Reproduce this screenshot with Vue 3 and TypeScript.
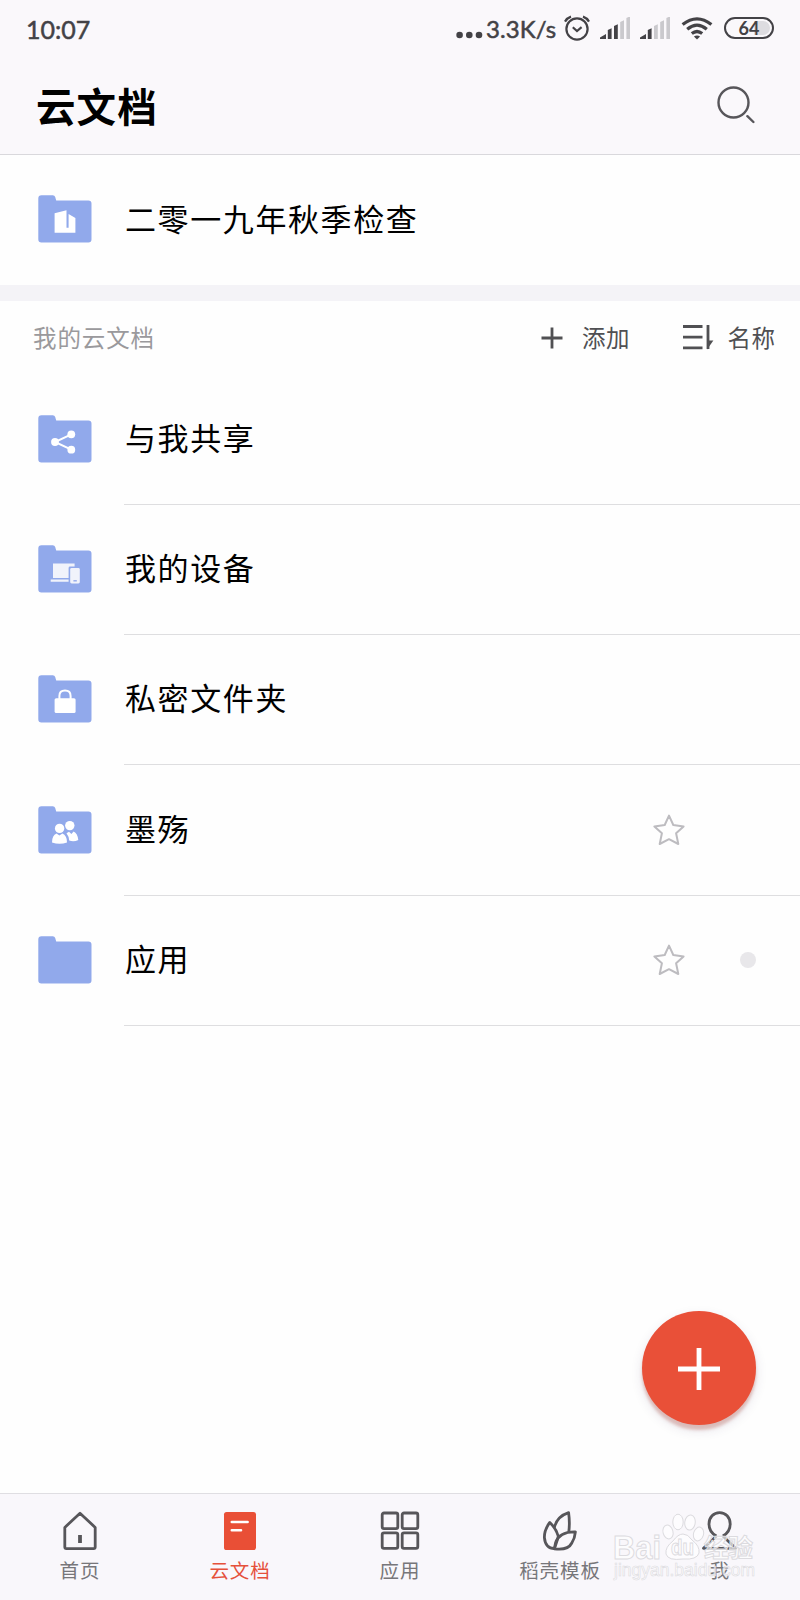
<script setup lang="ts">
type Badge = 'building' | 'share' | 'devices' | 'lock' | 'people' | 'none'

interface FolderRow {
  name: string
  badge: Badge
  star?: boolean
  dot?: boolean
}

interface Tab {
  label: string
  icon: 'home' | 'doc' | 'grid' | 'leaf' | 'user'
  active?: boolean
}

const folders: FolderRow[] = [
  { name: '二零一九年秋季检查', badge: 'building' },
  { name: '与我共享', badge: 'share' },
  { name: '我的设备', badge: 'devices' },
  { name: '私密文件夹', badge: 'lock' },
  { name: '墨殇', badge: 'people', star: true },
  { name: '应用', badge: 'none', star: true, dot: true },
]

const groups = [
  { key: 'team', rows: folders.slice(0, 1) },
  { key: 'mine', rows: folders.slice(1) },
]

const tabs: Tab[] = [
  { label: '首页', icon: 'home' },
  { label: '云文档', icon: 'doc', active: true },
  { label: '应用', icon: 'grid' },
  { label: '稻壳模板', icon: 'leaf' },
  { label: '我', icon: 'user' },
]

const bars = [0, 1, 2, 3, 4]
const signals = [3, 2]
</script>

<template>
  <div class="screen">
    <header class="top">
      <div class="status">
        <span class="clock">10:07</span>
        <div class="status-right">
          <svg class="dots" width="27" height="8" viewBox="0 0 27 8">
            <circle cx="3.6" cy="4" r="3.3" /><circle cx="13.3" cy="4" r="3.3" /><circle cx="23" cy="4" r="3.3" />
          </svg>
          <span class="speed">3.3K/s</span>
          <svg class="alarm" width="26" height="26" viewBox="0 0 26 26">
            <circle cx="13" cy="14" r="10.6" />
            <path d="M8.8 12.2 L13 16 L17.6 12.2" />
            <path d="M1 6.6 Q3.2 2.8 7 1.6 M25 6.6 Q22.8 2.8 19 1.6" />
          </svg>
          <svg v-for="(level, s) in signals" :key="s" class="signal" width="30" height="22" viewBox="0 0 30 22">
            <path
              v-for="b in bars"
              :key="b"
              :class="{ off: b >= level }"
              :d="b === 0 ? 'M0 22 V20.6 L6 17 V22 Z' : `M${b * 6.2 + 1.6} 22 V${17 - b * 4} L${b * 6.2 + 5.4} ${15.2 - b * 4} V22 Z`"
            />
          </svg>
          <svg class="wifi" width="32" height="23" viewBox="0 0 32 23">
            <path d="M1.6 7.6 Q16 -4 30.4 7.6 M6.2 12.2 Q16 4 25.8 12.2 M10.8 16.6 Q16 12.4 21.2 16.6" />
            <path class="solid" d="M16 22.6 L12.9 19.6 Q16 17.4 19.1 19.6 Z" />
          </svg>
          <span class="battery"><span class="charge">64</span></span>
        </div>
      </div>
      <div class="title-bar">
        <h1>云文档</h1>
        <svg class="search" width="38" height="38" viewBox="0 0 38 38">
          <circle cx="16.5" cy="16.5" r="15" />
          <path d="M30.4 30.2 L36.4 36" />
        </svg>
      </div>
    </header>

    <main class="content">
      <section v-for="group in groups" :key="group.key" :class="['group', group.key]">
        <div v-if="group.key === 'mine'" class="section-head">
          <span class="section-title">我的云文档</span>
          <button class="tool add">
            <svg width="22" height="22" viewBox="0 0 22 22"><path d="M11 0.5 V21.5 M0.5 11 H21.5" /></svg>
            <span>添加</span>
          </button>
          <button class="tool">
            <svg width="31" height="25" viewBox="0 0 31 25">
              <path d="M0 1.5 H19.5 M0 12.2 H19.5 M0 22.8 H19.5 M25 0 V24" />
              <path class="solid" d="M24 24.5 V15.5 H30.4 Z" />
            </svg>
            <span>名称</span>
          </button>
        </div>

        <div v-for="row in group.rows" :key="row.name" class="row">
          <svg class="folder" width="54" height="48" viewBox="0 0 54 48">
            <path
              class="shape"
              d="M3.5 0.3 H14.8 Q16.6 0.3 17.2 2 L18.2 5.6 H50.3 Q53.5 5.6 53.5 8.8 V44.2 Q53.5 47.4 50.3 47.4 H3.5 Q0.3 47.4 0.3 44.2 V3.5 Q0.3 0.3 3.5 0.3 Z"
            />
            <g v-if="row.badge === 'building'" class="badge">
              <path d="M16.6 18.2 L28.5 15.2 V32.8 H30.6 V19 L37.4 23 V37.8 H16.6 Z" />
            </g>
            <g v-else-if="row.badge === 'share'" class="badge">
              <path class="line" d="M33.3 19.4 L17 27 L33.3 34.6" />
              <circle cx="33.3" cy="19.3" r="3.9" /><circle cx="17" cy="27" r="3.9" /><circle cx="33.3" cy="34.7" r="3.9" />
            </g>
            <g v-else-if="row.badge === 'devices'" class="badge soft">
              <path d="M15 18.4 H36.6 V21.6 H32 Q30.6 21.6 30.6 23 V33 H15 Z M12.7 34.6 H30.6 V36.8 H12.7 Z" />
              <rect x="32.2" y="23" width="9.6" height="15.4" rx="1.4" />
              <path class="key" d="M35.4 35.8 H38.8" />
            </g>
            <g v-else-if="row.badge === 'lock'" class="badge">
              <rect x="16.6" y="23.2" width="21" height="14.8" rx="1.6" />
              <path class="hoop" d="M21.4 24.5 V21 Q21.4 15.6 27 15.6 Q32.6 15.6 32.6 21 V24.5" />
            </g>
            <g v-else-if="row.badge === 'people'" class="badge">
              <circle cx="31.8" cy="19.6" r="4.7" />
              <path d="M28.5 27.2 L31 25.8 L33.4 28 L35.6 25.6 Q39.6 27.6 40.3 34 Q36 36 31.2 34.6 Q31 30.4 28.5 27.2 Z" />
              <circle cx="21.6" cy="22.4" r="4.7" />
              <path d="M18.5 27.6 L21.4 29.6 L24.4 27.6 Q29 29.6 29 36.4 Q21.6 39 14 36.4 Q14 29.8 18.5 27.6 Z" />
            </g>
          </svg>
          <div class="row-body">
            <span class="name">{{ row.name }}</span>
            <svg v-if="row.star" class="star" width="32" height="32" viewBox="0 0 32 32">
              <path d="M16 1.6 L20.3 11 L30.6 12.4 L23.1 19.3 L25.3 30 L16 25.2 L6.7 30 L8.9 19.3 L1.4 12.4 L11.7 11 Z" />
            </svg>
            <span v-if="row.star" class="more"><i v-if="row.dot" class="dot"></i></span>
          </div>
        </div>
      </section>
    </main>

    <nav class="tabs">
      <a v-for="tab in tabs" :key="tab.label" :class="['tab', { active: tab.active }]">
        <svg width="40" height="40" viewBox="0 0 40 40">
          <g v-if="tab.icon === 'home'">
            <path d="M20 2.2 L35.2 16.4 V36 Q35.2 37.6 33.6 37.6 H6.4 Q4.8 37.6 4.8 36 V16.4 Z" />
            <path class="door" d="M20 24 V32" />
          </g>
          <g v-else-if="tab.icon === 'doc'">
            <rect class="fill" x="4" y="1" width="32" height="38" rx="2.6" />
            <path class="white" d="M11.8 11 H27.6 M11.8 19.2 H21" />
          </g>
          <g v-else-if="tab.icon === 'grid'">
            <rect x="2.2" y="2" width="15.6" height="15.6" rx="1.8" /><rect x="22.2" y="2" width="15.6" height="15.6" rx="1.8" />
            <rect x="2.2" y="21.8" width="15.6" height="15.6" rx="1.8" /><rect x="22.2" y="21.8" width="15.6" height="15.6" rx="1.8" />
          </g>
          <g v-else-if="tab.icon === 'leaf'">
            <path d="M14.2 17 Q16.8 5.4 28.6 1.6 Q30 11.4 28.8 21" />
            <path d="M9.8 11.4 Q4.2 19 4.4 26.6 Q5.4 37.4 14.4 37.6 Q18.4 26.6 18.2 25 Q16.2 17.8 9.8 11.4 Z" />
            <path d="M14.4 37.8 Q28 39.6 31.8 32 Q34.8 27.4 35.4 20.8 Q19.4 20.4 15.6 31.6 Z" />
          </g>
          <g v-else>
            <path d="M16.4 25 C11.4 22.4 9 17.6 9 13 C9 6.4 13.6 1.6 19.6 1.6 C25.600 1.6 30.200 6.400 30.200 13 C30.200 17.600 27.800 22.400 22.800 25 M16.400 25 L3.500 37.300 H35.700 L22.800 25" />
          </g>
        </svg>
        <span>{{ tab.label }}</span>
      </a>
    </nav>

    <button class="fab">
      <svg width="42" height="42" viewBox="0 0 42 42"><path d="M21 0 V42 M0 21 H42" /></svg>
    </button>

    <svg class="watermark" width="160" height="80" viewBox="0 0 160 80">
      <g class="paw">
        <ellipse cx="56" cy="22" rx="5" ry="7" transform="rotate(-14 56 22)" />
        <ellipse cx="66" cy="12" rx="5.2" ry="7.8" />
        <ellipse cx="78" cy="12.5" rx="5.2" ry="7.6" transform="rotate(8 78 12.5)" />
        <ellipse cx="86.5" cy="24" rx="5" ry="7" transform="rotate(16 86.5 24)" />
        <path d="M71 24 Q76 24 80 30 Q88 36 87 43 Q85 50 71 49 Q56 51 54 44 Q53 37 61 31 Q66 24 71 24 Z" />
      </g>
      <text class="brand" x="1" y="48.5" textLength="48" lengthAdjust="spacingAndGlyphs">Bai</text>
      <text class="brand du" x="59" y="45" textLength="23" lengthAdjust="spacingAndGlyphs">du</text>
      <text class="brand cjk" x="92" y="47" textLength="49">经验</text>
      <text class="site" x="2" y="66" textLength="141" lengthAdjust="spacingAndGlyphs">jingyan.baidu.com</text>
    </svg>
  </div>
</template>

<style>
body {
  margin: 0;
}
</style>

<style scoped>
.screen {
  position: relative;
  display: flex;
  flex-direction: column;
  width: 800px;
  height: 1600px;
  overflow: hidden;
  background: #fefefe;
  font-family: "Noto Sans CJK SC", sans-serif;
  color: #000;
}
svg {
  display: block;
  flex: none;
  fill: none;
}
button {
  border: 0;
  padding: 0;
  background: none;
  font: inherit;
  color: inherit;
}
.top {
  box-sizing: border-box;
  height: 155px;
  background: #faf8fb;
  border-bottom: 1px solid #d9d8dc;
}
.status {
  display: flex;
  align-items: center;
  justify-content: space-between;
  height: 56px;
  padding: 0 26px;
  color: #434246;
  font-family: Lato, sans-serif;
  -webkit-text-stroke: 0.5px #434246;
}
.clock {
  padding-top: 1px;
  font-size: 25px;
  letter-spacing: 0;
}
.status-right {
  display: flex;
  align-items: center;
}
.dots {
  fill: #434246;
  margin: 14px 3px 0 0;
}
.speed {
  width: 71px;
  margin-right: 7px;
  font-size: 24px;
  letter-spacing: 0.1px;
  white-space: nowrap;
}
.alarm {
  stroke: #434246;
  stroke-width: 2.2;
  margin-right: 10px;
}
.signal {
  fill: #434246;
  margin-right: 10px;
}
.signal .off {
  fill: #cac9cd;
}
.wifi {
  stroke: #434246;
  stroke-width: 3.2;
  margin: 0 11px 0 1px;
}
.wifi .solid {
  fill: #434246;
  stroke: none;
}
.battery {
  box-sizing: border-box;
  width: 50px;
  height: 22px;
  padding: 2px;
  border: 2px solid #434246;
  border-radius: 11px;
}
.charge {
  display: block;
  height: 14px;
  border-radius: 7px;
  background: linear-gradient(90deg, transparent 62%, #dddce0 62%);
  font-size: 18px;
  font-weight: 700;
  line-height: 14px;
  text-align: center;
  -webkit-text-stroke: 0;
}
.title-bar {
  display: flex;
  align-items: center;
  justify-content: space-between;
  height: 98px;
  padding: 0 45px 0 36px;
}
h1 {
  margin: 0 0 1px;
  font-size: 39.5px;
  line-height: 50px;
  font-weight: 700;
  letter-spacing: 1.1px;
}
.search {
  stroke: #57565a;
  stroke-width: 2.4;
  stroke-linecap: round;
}
.content {
  flex: 1;
}
.group.team {
  border-bottom: 16px solid #f4f3f7;
}
.row {
  display: flex;
  align-items: center;
  box-sizing: border-box;
  height: 130.3px;
  padding-left: 38.4px;
}
.folder {
  margin: 0 31.6px 2px 0;
}
.folder .shape {
  fill: #91a9eb;
}
.badge {
  fill: #fff;
}
.badge.soft {
  fill: #f1f3fb;
}
.badge .line {
  fill: none;
  stroke: #fff;
  stroke-width: 2;
}
.badge .hoop {
  fill: none;
  stroke: #fff;
  stroke-width: 2;
}
.badge .key {
  stroke: #91a9eb;
  stroke-width: 1.4;
}
.row-body {
  display: flex;
  align-items: center;
  box-sizing: border-box;
  flex: 1;
  height: 100%;
  border-bottom: 1px solid #dedee0;
}
.team .row {
  height: 130px;
}
.mine {
  padding-top: 0.5px;
}
.team .row-body {
  border-bottom: 0;
}
.name {
  flex: 1;
  padding-left: 1px;
  font-size: 31px;
  line-height: 44px;
  letter-spacing: 1.6px;
  margin-bottom: 5px;
}
.star {
  stroke: #bdbcc0;
  stroke-width: 2;
  stroke-linejoin: round;
  margin-bottom: 1px;
}
.more {
  display: flex;
  justify-content: center;
  width: 105px;
  margin-right: 10px;
}
.dot {
  width: 16px;
  height: 16px;
  margin-left: 20px;
  border-radius: 50%;
  background: #e8e7ea;
}
.section-head {
  display: flex;
  align-items: center;
  height: 73px;
  padding: 0 24.5px 0 33px;
  font-size: 23.5px;
  line-height: 34px;
}
.section-head span {
  margin-bottom: 2px;
}
.section-title {
  flex: 1;
  color: #9a999c;
  letter-spacing: 0.9px;
}
.tool {
  display: flex;
  align-items: center;
  gap: 14px;
  color: #505053;
  letter-spacing: 0.5px;
}
.tool svg {
  stroke: #505053;
  stroke-width: 2.8;
  margin-bottom: 1px;
}
.tool .solid {
  fill: #505053;
  stroke: none;
}
.tool.add {
  gap: 19px;
  margin-right: 52.5px;
}
.tabs {
  display: grid;
  grid-template-columns: repeat(5, 160px);
  box-sizing: border-box;
  height: 107px;
  border-top: 1px solid #dfdee2;
  background: #f9f7fb;
}
.tab {
  display: flex;
  flex-direction: column;
  align-items: center;
  padding-top: 17px;
  color: #77767a;
  font-size: 19.5px;
  line-height: 28px;
  letter-spacing: 0.9px;
}
.tab svg {
  margin-bottom: 5px;
  stroke: #57565a;
  stroke-width: 2.8;
  stroke-linejoin: round;
}
.tab .door {
  stroke-width: 3.8;
}
.tab .fill {
  fill: #e94f36;
  stroke: none;
}
.tab .white {
  stroke: #fff;
  stroke-width: 2.6;
  stroke-linecap: round;
}
.tab.active {
  color: #e5513b;
}
.fab {
  position: absolute;
  left: 641.5px;
  top: 1311px;
  display: flex;
  align-items: center;
  justify-content: center;
  width: 114px;
  height: 114px;
  border-radius: 50%;
  background: #e95038;
  box-shadow: 0 5px 3px rgba(190, 110, 100, 0.38), 0 5px 12px rgba(60, 50, 90, 0.13);
}
.fab svg {
  stroke: #fff;
  stroke-width: 4.8;
  margin-top: 1px;
}
.watermark {
  position: absolute;
  left: 612px;
  top: 1510px;
}
.paw,
.brand {
  fill: rgba(255, 255, 255, 0.65);
  stroke: #dcdbdf;
  stroke-width: 1;
}
.brand {
  font: 700 33px "Liberation Sans", sans-serif;
}
.brand.du {
  font-size: 22px;
}
.brand.cjk {
  font: 700 25px "Noto Sans CJK SC", sans-serif;
}
.site {
  fill: rgba(255, 255, 255, 0.65);
  stroke: #dcdbdf;
  stroke-width: 0.6;
  font: 18px "Liberation Sans", sans-serif;
}
</style>
